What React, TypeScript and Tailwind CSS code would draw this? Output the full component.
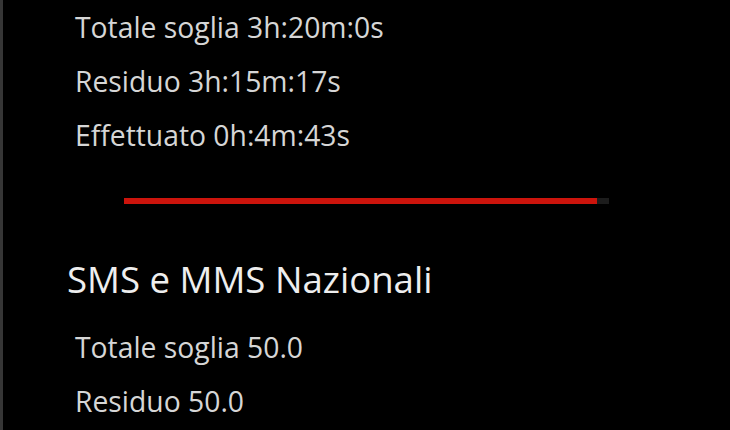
import React from "react";

const body = "text-[#d6d6d6] text-[28.3px] leading-[54px] whitespace-nowrap";

export default function App() {
  return (
    <div
      className="w-[730px] h-[430px] bg-black overflow-hidden flex"
      style={{ fontFamily: '"Open Sans", "Noto Sans", sans-serif' }}
    >
      <div className="w-[3px] h-full bg-[#363636] shrink-0" />
      <div className="flex flex-col flex-1">
        <div className="flex flex-col pl-[72px]">
          <div className={body}>Totale soglia 3h:20m:0s</div>
          <div className={body}>Residuo 3h:15m:17s</div>
          <div className={body}>Effettuato 0h:4m:43s</div>
        </div>
        <div className="mt-[36px] ml-[121px] flex h-[6px]">
          <div className="w-[473px] h-full bg-[#cc140c]" />
          <div className="w-[12px] h-full bg-[#1c1c1c]" />
        </div>
        <div className="mt-[54px] pl-[64px] text-[#eeeeee] text-[36.6px] leading-[42px] whitespace-nowrap">
          SMS e MMS Nazionali
        </div>
        <div className="mt-[20px] flex flex-col pl-[72px]">
          <div className={body}>Totale soglia 50.0</div>
          <div className={body}>Residuo 50.0</div>
        </div>
      </div>
    </div>
  );
}
